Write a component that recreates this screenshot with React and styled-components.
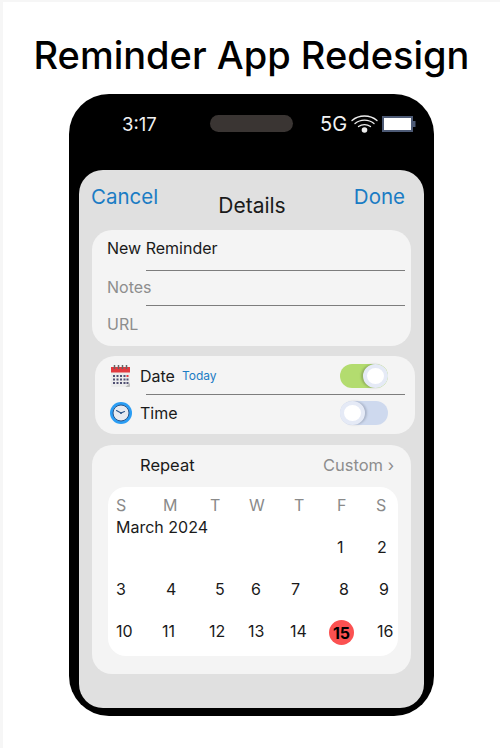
import styled, { createGlobalStyle } from "styled-components";

const GlobalStyle = createGlobalStyle`
  html, body {
    margin: 0;
    padding: 0;
    background: #ffffff;
  }
  * {
    box-sizing: border-box;
  }
`;

const Page = styled.div`
  width: 500px;
  height: 748px;
  padding-top: 30px;
  display: flex;
  flex-direction: column;
  align-items: center;
  background: #ffffff;
  border-top: 2px solid #f6f6f6;
  border-left: 3px solid #f6f6f6;
  font-family: Inter, "Noto Sans", sans-serif;
  color: #111111;
  overflow: hidden;
`;

const Title = styled.h1`
  margin: 0 0 16px;
  height: 46px;
  font-size: 38px;
  line-height: 46px;
  font-weight: 500;
  color: #000000;
  white-space: nowrap;
`;

const Phone = styled.div`
  width: 365px;
  height: 622px;
  padding: 0 10px 8px;
  display: flex;
  flex-direction: column;
  background: #000000;
  border-radius: 40px;
`;

const StatusBar = styled.div`
  height: 76px;
  padding: 16px 0 0 43px;
  display: flex;
  align-items: flex-start;
  color: #f2f2f2;
`;

const Clock = styled.span`
  width: 88px;
  font-size: 18.5px;
  line-height: 28px;
`;

const Island = styled.div`
  width: 83px;
  height: 17px;
  margin-top: 5px;
  border-radius: 9px;
  background: #3a3533;
`;

const StatusIcons = styled.div`
  margin-left: 27px;
  display: flex;
  align-items: center;
  gap: 4px;
  font-size: 20px;
  line-height: 28px;
`;

const Screen = styled.div`
  flex: 1;
  padding: 0 13px;
  background: #e0e0e0;
  border-radius: 24px;
`;

const NavBar = styled.div`
  height: 60px;
  display: grid;
  grid-template-columns: 1fr auto 1fr;
  margin: 0 6px 0 -1px;
`;

const NavAction = styled.span`
  padding-top: 14px;
  font-size: 20.5px;
  line-height: 26px;
  color: #1b7cc4;
  text-align: ${(p) => (p.$end ? "right" : "left")};
`;

const NavTitle = styled.span`
  padding: 23px 0 0 8px;
  font-size: 21px;
  line-height: 26px;
  color: #1a1a1a;
`;

const Card = styled.div`
  background: #f4f4f4;
  border-radius: 20px;
`;

const FormCard = styled(Card)`
  width: 319px;
  height: 116px;
`;

const FormRow = styled.div`
  height: ${(p) => p.$h}px;
  padding: 0 0 ${(p) => p.$pb}px 15px;
  display: flex;
  align-items: center;
  font-size: 16px;
  color: ${(p) => (p.$muted ? "#8d8d8d" : "#1a1a1a")};
`;

const Rule = styled.div`
  height: 1px;
  margin: 0 ${(p) => p.$right}px 0 ${(p) => p.$left}px;
  background: #7d7d7d;
`;

const ToggleCard = styled(Card)`
  width: 320px;
  height: 78px;
  margin: 10px 0 11px 3px;
  padding-top: 1px;
`;

const ToggleRow = styled.div`
  height: ${(p) => p.$h}px;
  padding: 0 27px ${(p) => p.$pb || 0}px 15px;
  display: flex;
  align-items: center;
  font-size: 16px;
  color: #1a1a1a;
`;

const RowIcon = styled.svg`
  width: 22px;
  height: 24px;
  margin-right: 8px;
  flex: none;
`;

const TodayTag = styled.span`
  margin-left: 7px;
  font-size: 12px;
  color: #1b7cc4;
`;

const Toggle = styled.div`
  width: 48px;
  height: 24px;
  margin-left: auto;
  display: flex;
  justify-content: ${(p) => (p.$on ? "flex-end" : "flex-start")};
  border-radius: 12px;
  background: ${(p) => (p.$on ? "#b3dc6f" : "#ced9ee")};
`;

const Knob = styled.div`
  width: 25px;
  height: 24px;
  border-radius: 50%;
  background: #ffffff;
  border: 4px solid #e5eaf6;
  box-shadow: ${(p) => (p.$on ? "-2px 0 2px rgba(70, 80, 60, 0.3)" : "2px 0 2px rgba(70, 80, 100, 0.25)")};
`;

const RepeatCard = styled(Card)`
  width: 319px;
  height: 229px;
  padding: 0 13px 0 16px;
`;

const RepeatRow = styled.div`
  height: 42px;
  padding: 0 4px 2px 32px;
  display: flex;
  align-items: center;
  justify-content: space-between;
  font-size: 16.5px;
  color: #1a1a1a;
`;

const CustomLabel = styled.span`
  color: #8d8d8d;
`;

const Calendar = styled.div`
  height: 169px;
  padding: 8px 0 0 8px;
  background: #ffffff;
  border-radius: 18px;
`;

const Week = styled.div`
  height: ${(p) => p.$h}px;
  display: flex;
  align-items: center;
  font-size: 16px;
  color: ${(p) => (p.$head ? "#8a8a8a" : "#1a1a1a")};
`;

const Day = styled.span`
  width: ${(p) => p.$w}px;
  flex: none;
`;

const MonthLabel = styled.div`
  height: 24px;
  font-size: 16px;
  line-height: 24px;
  color: #1a1a1a;
`;

const TodayDay = styled.span`
  width: 25px;
  height: 25px;
  margin: 3px 23px 0 0;
  flex: none;
  display: flex;
  align-items: center;
  justify-content: center;
  border-radius: 50%;
  background: #fb5151;
  font-weight: 700;
  color: #000000;
`;

const weekdays = [
  ["S", 47], ["M", 47], ["T", 39], ["W", 45], ["T", 43], ["F", 39], ["S", 20],
];
const rowTwo = [
  ["3", 50], ["4", 49], ["5", 36], ["6", 40], ["7", 48], ["8", 40], ["9", 20],
];

const WifiIcon = () => (
  <svg width="27" height="18" viewBox="0 0 27 18" fill="none" stroke="#eeeeee" strokeLinecap="round">
    <path d="M1 5.5C8 -.5 19 -.5 26 5.5" strokeWidth="1.3" />
    <path d="M4 8.5C9.5 4 17.5 4 23 8.5" strokeWidth="1.3" />
    <path d="M7.5 11.5C11 9 16 9 19.5 11.5" strokeWidth="1.3" />
    <circle cx="13.5" cy="15" r="2.8" fill="#eeeeee" stroke="none" />
  </svg>
);

const BatteryIcon = () => (
  <svg width="34" height="16" viewBox="0 0 34 16">
    <rect x="1" y="1" width="29" height="14" fill="#ffffff" stroke="#4d5a75" strokeWidth="2" />
    <rect x="31" y="5" width="2.5" height="6" fill="#4d5a75" />
  </svg>
);

const CalendarIcon = () => (
  <RowIcon viewBox="0 0 22 24">
    <rect x="1" y="3" width="19" height="20" rx="1" fill="#ececec" />
    <rect x="1" y="3" width="19" height="5.5" fill="#e23a3f" />
    {[4.5, 8.5, 12.5, 16.5].map((x) => (
      <rect key={x} x={x - 0.75} y="1" width="1.5" height="4" fill="#666666" />
    ))}
    {[11, 14.5, 18].map((y) =>
      [3, 6.5, 10, 13.5, 16.5].map((x) => (
        <rect key={`${x}-${y}`} x={x} y={y} width="2" height="2" fill={x === 16.5 && y === 11 ? "#e23a3f" : "#4f4f72"} />
      ))
    )}
    <path d="M15.5 23l4.5-4v3a1 1 0 0 1-1 1z" fill="#bcbcbc" />
  </RowIcon>
);

const ClockIcon = () => (
  <RowIcon viewBox="0 0 22 24">
    <circle cx="11" cy="12" r="11" fill="#2a9df4" />
    <circle cx="11" cy="12" r="8" fill="#e6eaf1" stroke="#2b5488" strokeWidth="1" />
    <path d="M11 12L6.5 9.5M11 12l3.5-1.5" stroke="#2b5488" strokeWidth="1.1" strokeLinecap="round" />
    <circle cx="11" cy="12" r="1" fill="#2b5488" />
  </RowIcon>
);

const App = () => {
  return (
    <Page>
      <GlobalStyle />
      <Title>Reminder App Redesign</Title>
      <Phone>
        <StatusBar>
          <Clock>3:17</Clock>
          <Island />
          <StatusIcons>
            5G
            <WifiIcon />
            <BatteryIcon />
          </StatusIcons>
        </StatusBar>
        <Screen>
          <NavBar>
            <NavAction>Cancel</NavAction>
            <NavTitle>Details</NavTitle>
            <NavAction $end>Done</NavAction>
          </NavBar>
          <FormCard>
            <FormRow $h={40} $pb={4}>New Reminder</FormRow>
            <Rule $left={54} $right={6} />
            <FormRow $h={34} $pb={2} $muted>Notes</FormRow>
            <Rule $left={54} $right={6} />
            <FormRow $h={40} $pb={4} $muted>URL</FormRow>
          </FormCard>
          <ToggleCard>
            <ToggleRow $h={37}>
              <CalendarIcon />
              Date
              <TodayTag>Today</TodayTag>
              <Toggle $on>
                <Knob $on />
              </Toggle>
            </ToggleRow>
            <Rule $left={51} $right={10} />
            <ToggleRow $h={38} $pb={2}>
              <ClockIcon />
              Time
              <Toggle>
                <Knob />
              </Toggle>
            </ToggleRow>
          </ToggleCard>
          <RepeatCard>
            <RepeatRow>
              Repeat
              <CustomLabel>Custom ›</CustomLabel>
            </RepeatRow>
            <Calendar>
              <Week $h={20} $head>
                {weekdays.map(([label, width], i) => (
                  <Day key={i} $w={width}>{label}</Day>
                ))}
              </Week>
              <MonthLabel>March 2024</MonthLabel>
              <Week $h={16}>
                <Day $w={221} />
                <Day $w={40}>1</Day>
                <Day $w={20}>2</Day>
              </Week>
              <Week $h={68}>
                {rowTwo.map(([label, width]) => (
                  <Day key={label} $w={width}>{label}</Day>
                ))}
              </Week>
              <Week $h={16}>
                <Day $w={46}>10</Day>
                <Day $w={47}>11</Day>
                <Day $w={39}>12</Day>
                <Day $w={42}>13</Day>
                <Day $w={39}>14</Day>
                <TodayDay>15</TodayDay>
                <Day $w={20}>16</Day>
              </Week>
            </Calendar>
          </RepeatCard>
        </Screen>
      </Phone>
    </Page>
  );
};

export default App;
